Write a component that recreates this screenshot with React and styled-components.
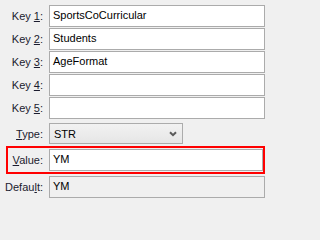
import React from 'react';
import styled, { createGlobalStyle } from 'styled-components';

const GlobalStyle = createGlobalStyle`
  html, body {
    margin: 0;
    padding: 0;
    background: #f0f0f0;
  }
  body {
    font-family: "Liberation Sans", Arial, sans-serif;
    font-size: 11px;
    color: #000;
  }
`;

const keys = ['SportsCoCurricular', 'Students', 'AgeFormat', '', ''];

function Label({ text, mnemonic }) {
  const i = text.indexOf(mnemonic);
  return (
    <StyledLabel>
      {text.slice(0, i)}
      <u>{mnemonic}</u>
      {text.slice(i + 1)}:
    </StyledLabel>
  );
}

function App() {
  return (
    <>
      <GlobalStyle />
      <StyledForm>
        <StyledKeys>
          {keys.map((v, i) => (
            <StyledRow key={i}>
              <Label text={`Key ${i + 1}`} mnemonic={`${i + 1}`} />
              <StyledInput>{v}</StyledInput>
            </StyledRow>
          ))}
        </StyledKeys>
        <StyledRow $top={4}>
          <Label text="Type" mnemonic="T" />
          <StyledSelect>
            <span>STR</span>
            <svg width="8" height="6" viewBox="0 0 8 6">
              <path d="M1 1.2 L4 4.2 L7 1.2" fill="none" stroke="#5a5a5a" strokeWidth="2" />
            </svg>
          </StyledSelect>
        </StyledRow>
        <StyledHighlight>
          <StyledRow $label={35}>
            <Label text="Value" mnemonic="V" />
            <StyledInput>YM</StyledInput>
          </StyledRow>
        </StyledHighlight>
        <StyledRow $top={2}>
          <Label text="Default" mnemonic="l" />
          <StyledInput $readOnly>YM</StyledInput>
        </StyledRow>
      </StyledForm>
    </>
  );
}

const StyledForm = styled.div`
  box-sizing: border-box;
  width: 265px;
  height: 202px;
  display: flex;
  flex-direction: column;
  padding: 5px 0 0 0;
`;
const StyledKeys = styled.div`
  display: flex;
  flex-direction: column;
  gap: 1px;
`;
const StyledRow = styled.div`
  display: grid;
  grid-template-columns: ${(p) => p.$label || 43}px 1fr;
  column-gap: 6px;
  align-items: center;
  margin-top: ${(p) => p.$top || 0}px;
`;
const StyledLabel = styled.label`
  text-align: right;
  white-space: nowrap;
  color: #1b1b2e;
  u {
    text-underline-offset: 1px;
  }
`;
const StyledInput = styled.div`
  box-sizing: border-box;
  height: 22px;
  line-height: 18px;
  padding: 0 3px;
  border: 1px solid #ababab;
  box-shadow: inset 0 0 0 1px ${(p) => (p.$readOnly ? '#f0f0f0' : '#fff')};
  background: ${(p) => (p.$readOnly ? '#f0f0f0' : '#fff')};
  white-space: nowrap;
  overflow: hidden;
`;
const StyledSelect = styled.div`
  box-sizing: border-box;
  width: 134px;
  height: 21px;
  display: flex;
  align-items: center;
  justify-content: space-between;
  padding: 0 5px 0 4px;
  border: 1px solid #acacac;
  background: linear-gradient(#f2f2f2, #e6e6e6);
`;
const StyledHighlight = styled.div`
  margin: 2px 0 0 6px;
  border: 2px solid #f00;
  padding: 1px 0 1px 0;
`;

export default App;
